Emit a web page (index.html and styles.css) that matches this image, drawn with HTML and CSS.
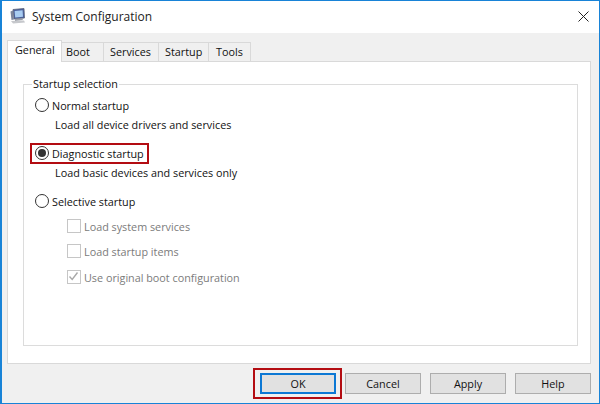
FILE: index.html
```
<!DOCTYPE html>
<html lang="en">
<head>
<meta charset="utf-8">
<title>System Configuration</title>
<link rel="stylesheet" href="styles.css">
</head>
<body>
<div class="window">
  <header class="titlebar">
    <svg class="app-icon" width="16" height="16" viewBox="0 0 16 16">
      <path d="M3 1.5 14 0.5 14.5 10 4 11Z" fill="#4a5f9c" stroke="#5a6478" stroke-width=".8"/>
      <path d="M4.6 3 12.6 2.3 13 8.8 5.2 9.5Z" fill="#a9cdf2"/>
      <path d="M5 11 12 10.3 13 12 5 13Z" fill="#9a9ea8"/>
      <path d="M1 13 14 12.6 15 14.4 3 15.4Z" fill="#c6c8cc"/>
      <path d="M.5 3.5 3 2.5 4 11.5 1.5 12Z" fill="#7d869c"/>
    </svg>
    <span class="title">System Configuration</span>
    <svg class="close" width="11" height="11" viewBox="0 0 11 11"><path d="M.5.5 10.5 10.5M10.5.5.5 10.5" stroke="#222" stroke-width="1" fill="none"/></svg>
  </header>
  <main class="content">
    <nav class="tabs">
      <span class="tab active">General</span>
      <span class="tab tab-boot">Boot</span>
      <span class="tab tab-services">Services</span>
      <span class="tab tab-startup">Startup</span>
      <span class="tab tab-tools">Tools</span>
    </nav>
    <section class="panel">
      <fieldset class="group">
        <legend>Startup selection</legend>
        <div class="option first">
          <span class="radio"></span><span>Normal startup</span>
        </div>
        <p class="desc">Load all device drivers and services</p>
        <div class="option spaced">
          <span class="radio checked"></span><span>Diagnostic startup</span>
          <span class="redbox redbox-diag"></span>
        </div>
        <p class="desc">Load basic devices and services only</p>
        <div class="option spaced">
          <span class="radio"></span><span>Selective startup</span>
        </div>
        <div class="check"><span class="box"></span><span>Load system services</span></div>
        <div class="check"><span class="box"></span><span>Load startup items</span></div>
        <div class="check wide">
          <span class="box">
            <svg width="13" height="13" viewBox="0 0 13 13"><path d="M2.5 6.5 5.2 9.5 10.5 2.5" stroke="#a8a8a8" stroke-width="1.4" fill="none"/></svg>
          </span><span>Use original boot configuration</span>
        </div>
      </fieldset>
    </section>
    <footer class="buttons">
      <span class="btn default">OK<span class="redbox redbox-ok"></span></span>
      <span class="btn">Cancel</span>
      <span class="btn">Apply</span>
      <span class="btn">Help</span>
    </footer>
  </main>
</div>
</body>
</html>
```
FILE: styles.css
```
* { box-sizing: border-box; }
html, body { margin: 0; padding: 0; }
body {
  width: 600px;
  height: 404px;
  overflow: hidden;
  font-family: "Open Sans", "Noto Sans", sans-serif;
  font-size: 10.8px;
  color: #111;
}
.window {
  width: 600px;
  height: 404px;
  display: flex;
  flex-direction: column;
  border: 1px solid #1883d7;
  border-left-width: 2px;
  background: #f0f0f0;
}
.titlebar {
  height: 32px;
  flex: none;
  display: flex;
  align-items: center;
  background: #fff;
  padding: 0 10px 2px 8px;
}
.app-icon { flex: none; margin-right: 6px; }
.title { font-size: 12px; color: #222; flex: 1; }
.content {
  flex: 1;
  display: flex;
  flex-direction: column;
  padding: 8px 8px 0 5px;
}
.tabs {
  display: flex;
  align-items: flex-end;
  height: 21px;
  flex: none;
  position: relative;
  z-index: 1;
  margin-bottom: -1px;
}
.tab {
  height: 20px;
  background: #f0f0f0;
  border: 1px solid #d9d9d9;
  border-left: 0;
  display: flex;
  align-items: center;
  padding-left: 4px;
  line-height: 1;
}
.tab.active {
  height: 22px;
  width: 55px;
  background: #fff;
  border: 1px solid #d9d9d9;
  border-bottom: 0;
  padding: 0 0 3px 7px;
}
.tab-boot { width: 42px; }
.tab-services { width: 55px; padding-left: 6px; }
.tab-startup { width: 50px; padding-left: 6px; }
.tab-tools { width: 42px; padding-left: 7px; }
.panel {
  height: 303px;
  flex: none;
  background: #fff;
  border: 1px solid #d9d9d9;
  padding: 14px 12px 15px 15px;
}
.group {
  margin: 0;
  height: 270px;
  border: 1px solid #dcdcdc;
  padding: 0 0 0 11px;
  min-width: 0;
}
legend { padding: 0 1px; margin-left: -3px; line-height: 16px; }
.option {
  display: flex;
  align-items: center;
  height: 18px;
  position: relative;
  width: max-content;
}
.option.first { margin-top: 4px; }
.spaced { margin-top: 11px; }
.radio {
  width: 14px;
  height: 14px;
  border: 1px solid #333;
  border-radius: 50%;
  background: #fff;
  margin-right: 3px;
  flex: none;
  position: relative;
}
.radio.checked::after {
  content: "";
  position: absolute;
  inset: 2px;
  border-radius: 50%;
  background: #333;
}
.desc { margin: 2px 0 0 20px; line-height: 17px; height: 17px; }
.check {
  display: flex;
  align-items: center;
  margin-left: 32px;
  height: 18px;
  margin-top: 7px;
  color: #7b7b7b;
}
.check.wide { margin-top: 8px; }
.box {
  width: 14px;
  height: 14px;
  border: 1px solid #c6c6c6;
  background: #fff;
  margin-right: 3px;
  flex: none;
  display: flex;
}
.box svg { flex: none; margin: -1px 0 0 -1px; }
.redbox {
  position: absolute;
  border: 2px solid #b30c12;
  pointer-events: none;
}
.redbox-diag { left: -5px; right: -5px; top: -1px; bottom: -2px; }
.buttons {
  display: flex;
  justify-content: flex-end;
  gap: 9px;
  padding: 9px 0 0 0;
}
.btn {
  width: 76px;
  height: 21px;
  background: #e1e1e1;
  border: 1px solid #adadad;
  display: flex;
  align-items: center;
  justify-content: center;
  position: relative;
}
.btn.default { border: 2px solid #0c78d4; }
.redbox-ok { left: -9px; right: -8px; top: -7px; bottom: -7px; }
```
